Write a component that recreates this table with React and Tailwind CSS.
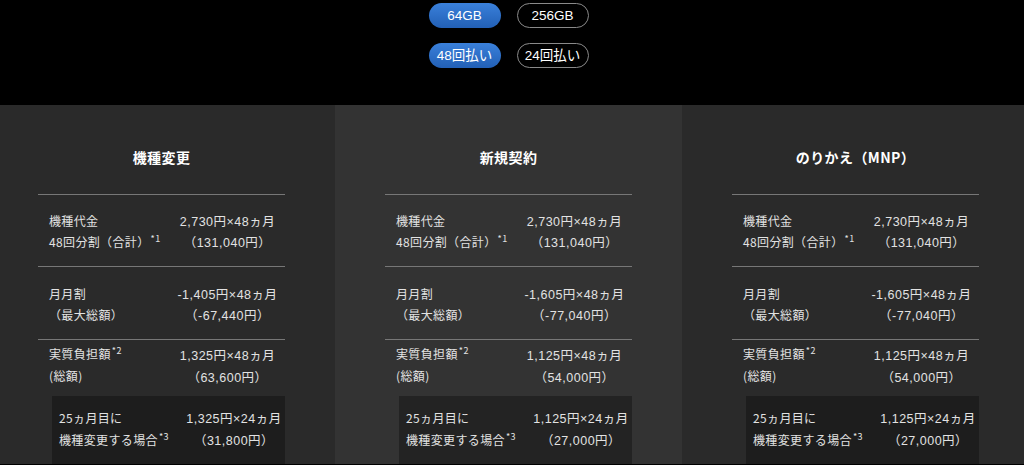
import React from "react";

const plans = [
  {
    title: "機種変更",
    bg: "bg-[#2a2a2a]",
    price: ["2,730円×48ヵ月", "（131,040円）"],
    discount: ["-1,405円×48ヵ月", "（-67,440円）"],
    net: ["1,325円×48ヵ月", "（63,600円）"],
    change: ["1,325円×24ヵ月", "（31,800円）"],
  },
  {
    title: "新規契約",
    bg: "bg-[#333333]",
    price: ["2,730円×48ヵ月", "（131,040円）"],
    discount: ["-1,605円×48ヵ月", "（-77,040円）"],
    net: ["1,125円×48ヵ月", "（54,000円）"],
    change: ["1,125円×24ヵ月", "（27,000円）"],
  },
  {
    title: "のりかえ（MNP）",
    bg: "bg-[#2a2a2a]",
    price: ["2,730円×48ヵ月", "（131,040円）"],
    discount: ["-1,605円×48ヵ月", "（-77,040円）"],
    net: ["1,125円×48ヵ月", "（54,000円）"],
    change: ["1,125円×24ヵ月", "（27,000円）"],
  },
];

const latin = { fontFamily: '"Liberation Sans", "Noto Sans CJK JP", sans-serif' };

function Pill({ active, children }) {
  return (
    <div
      style={latin}
      className={
        active
          ? "w-[72px] h-[25px] rounded-full flex items-center justify-center text-[13.5px] leading-none text-white bg-gradient-to-b from-[#3a80da] to-[#2260b6]"
          : "w-[72px] h-[25px] rounded-full flex items-center justify-center text-[13.5px] leading-none text-white border-[1.5px] border-[#8a8a8a]"
      }
    >
      {children}
    </div>
  );
}

function Sup({ n }) {
  return (
    <span className="relative -top-[5px] text-[9px] leading-none ml-[1px]">
      *{n}
    </span>
  );
}

// latin digits sit higher than the CJK labels, nudge them onto the same baseline
function Values({ lines }) {
  return (
    <div
      style={latin}
      className="flex flex-col items-center text-[12.5px] tracking-[0.04em] translate-y-[2px]"
    >
      <span>{lines[0]}</span>
      <span>{lines[1]}</span>
    </div>
  );
}

function PlanColumn({ plan }) {
  return (
    <div className={`w-[347px] shrink-0 pl-[50px] ${plan.bg}`}>
      <div className="w-[247px]">
        <h3 className="pt-[41px] pb-[26px] text-center text-[14px] leading-[22px] font-bold tracking-[0.03em] text-white">
          {plan.title}
        </h3>
        <div className="border-t border-[#777777]" />
        <div className="grid grid-cols-[121px_115px] pl-[11px] pt-[15px] pb-[14px] leading-[21px]">
          <div className="flex flex-col">
            <span>機種代金</span>
            <span className="whitespace-nowrap">
              48回分割（合計）
              <Sup n="1" />
            </span>
          </div>
          <Values lines={plan.price} />
        </div>
        <div className="border-t border-[#777777]" />
        <div className="grid grid-cols-[121px_115px] pl-[11px] pt-[16px] pb-[14px] leading-[21px]">
          <div className="flex flex-col">
            <span>月月割</span>
            <span>（最大総額）</span>
          </div>
          <Values lines={plan.discount} />
        </div>
        <div className="border-t border-[#777777]" />
        <div className="grid grid-cols-[121px_115px] pl-[11px] pt-[3px] leading-[22px]">
          <div className="flex flex-col">
            <span>
              実質負担額
              <Sup n="2" />
            </span>
            <span>(総額)</span>
          </div>
          <Values lines={plan.net} />
        </div>
        <div className="ml-[14px] mt-[9px] bg-black/30 grid grid-cols-[125px_100px] pl-[7px] pt-[11px] pb-[14px] leading-[21.5px]">
          <div className="flex flex-col">
            <span>25ヵ月目に</span>
            <span className="whitespace-nowrap">
              機種変更する場合
              <Sup n="3" />
            </span>
          </div>
          <Values lines={plan.change} />
        </div>
      </div>
    </div>
  );
}

export default function App() {
  return (
    <div
      className="w-[1024px] h-[465px] overflow-hidden bg-black"
      style={{ fontFamily: '"Noto Sans CJK JP", sans-serif' }}
    >
      <div className="w-[1041px] -ml-[12px]">
        <div className="h-[105px] pt-[3px] flex flex-col items-center gap-[15px]">
          <div className="flex gap-[16px]">
            <Pill active>64GB</Pill>
            <Pill>256GB</Pill>
          </div>
          <div className="flex gap-[16px]">
            <Pill active>48回払い</Pill>
            <Pill>24回払い</Pill>
          </div>
        </div>
        <div className="flex text-[12px] tracking-[0.03em] text-[#e2e2e2]">
          {plans.map((p) => (
            <PlanColumn key={p.title} plan={p} />
          ))}
        </div>
      </div>
    </div>
  );
}
